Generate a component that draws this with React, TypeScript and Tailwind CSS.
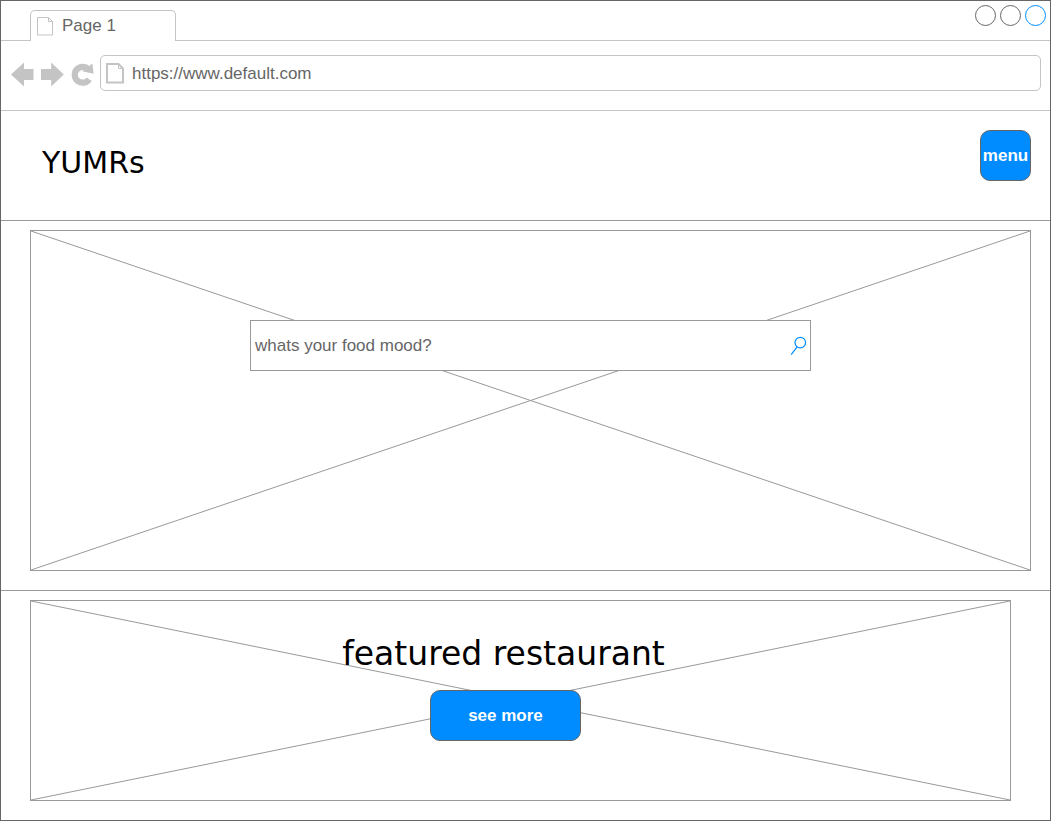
import React from "react";

function PageIcon() {
  return (
    <svg viewBox="0 0 18 20" className="h-5 w-[18px]" fill="none" stroke="#c4c4c4" strokeWidth="1" aria-hidden="true">
      <path d="M1.5 1.5H12.5L16.5 5.5V19H1.5Z" />
      <path d="M12.5 1.5V5.5H16.5" />
    </svg>
  );
}

function AddressPageIcon() {
  return (
    <svg viewBox="0 0 18 22" className="h-[22px] w-[18px]" fill="none" stroke="#c4c4c4" strokeWidth="2" aria-hidden="true">
      <path d="M1 2H12.5L17 6.5V20.5H1Z" />
      <path d="M12.5 2V6.5H17" strokeWidth="1" />
    </svg>
  );
}

function BackIcon() {
  return (
    <svg viewBox="0 0 24 26" className="h-[26px] w-6" fill="#c4c4c4" aria-hidden="true">
      <path d="M1 13.5L14 1.5V8H23.5V19H14V25.5Z" />
    </svg>
  );
}

function ForwardIcon() {
  return (
    <svg viewBox="0 0 24 26" className="h-[26px] w-6" fill="#c4c4c4" aria-hidden="true">
      <path d="M23.8 13.5L11.2 1.5V8H1V19H11.2V25.5Z" />
    </svg>
  );
}

function ReloadIcon() {
  return (
    <svg viewBox="0 0 24 26" className="h-[26px] w-6" aria-hidden="true">
      <path d="M19.2 18.2A7.9 7.9 0 1 1 18.4 8.4" fill="none" stroke="#c4c4c4" strokeWidth="6.2" />
      <path d="M22.4 2.6L23.6 12.8L12.2 10.2Z" fill="#c4c4c4" />
    </svg>
  );
}

function SearchIcon() {
  return (
    <svg viewBox="0 0 18 20" className="h-5 w-[18px]" fill="none" stroke="#008cff" strokeWidth="1.2" aria-hidden="true">
      <circle cx="11.3" cy="6.6" r="5.3" />
      <path d="M8.1 10.9L2.2 18.7" />
    </svg>
  );
}

function ImagePlaceholder({ className, children }: { className: string; children: React.ReactNode }) {
  return (
    <div className={`relative border border-[#999] ${className}`}>
      <svg className="absolute inset-0 h-full w-full" stroke="#999" strokeWidth="1" aria-hidden="true">
        <line x1="0" y1="0" x2="100%" y2="100%" />
        <line x1="0" y1="100%" x2="100%" y2="0" />
      </svg>
      {children}
    </div>
  );
}

function TabBar() {
  return (
    <div className="flex h-10 items-stretch">
      <div className="w-[29px] border-b border-[#c4c4c4]" />
      <div className="mt-[9px] flex w-[146px] items-center gap-2 rounded-t-[5px] border border-b-0 border-[#c4c4c4] pl-[5px] text-[17px] leading-5">
        <PageIcon />
        Page 1
      </div>
      <div className="flex flex-1 items-start justify-end gap-1 border-b border-[#c4c4c4] pt-1 pr-1">
        <button type="button" aria-label="Minimize" className="size-[21px] rounded-full border border-[#666]" />
        <button type="button" aria-label="Maximize" className="size-[21px] rounded-full border border-[#666]" />
        <button type="button" aria-label="Close" className="size-[21px] rounded-full border border-[#008cff]" />
      </div>
    </div>
  );
}

function AddressBar() {
  return (
    <div className="flex h-[70px] items-start border-b border-[#c4c4c4] px-[9px] pt-[14px]">
      <div className="mt-[6px] flex gap-[6px]">
        <button type="button" aria-label="Back"><BackIcon /></button>
        <button type="button" aria-label="Forward"><ForwardIcon /></button>
        <button type="button" aria-label="Reload"><ReloadIcon /></button>
      </div>
      <div className="ml-[6px] flex h-9 flex-1 items-center gap-2 rounded-[5px] border border-[#c4c4c4] pl-[5px]">
        <AddressPageIcon />
        <input type="text" aria-label="Address" defaultValue="https://www.default.com" className="min-w-0 flex-1 pt-px text-[17px] leading-5 outline-none" />
      </div>
    </div>
  );
}

export default function App() {
  return (
    <div className="flex min-h-screen flex-col border border-[#666] bg-white font-['Liberation_Sans',Arial,sans-serif] text-[#666]">
      <TabBar />
      <AddressBar />
      <header className="flex h-[110px] items-start justify-between border-b border-[#999] pt-[19px] pr-[19px] pl-[41px]">
        <h1 className="mt-[13px] font-['DejaVu_Sans',Verdana,sans-serif] text-[30px] leading-10 text-black">YUMRs</h1>
        <button type="button" className="h-[51px] w-[51px] rounded-[10px] border border-[#666] bg-[#008cff] text-[17px] font-bold text-white">
          menu
        </button>
      </header>
      <main>
        <section className="border-b border-[#999] pt-[9px] pr-[19px] pb-[19px] pl-[29px]">
          <ImagePlaceholder className="flex h-[341px] items-start justify-center pt-[89px]">
            <form onSubmit={(e) => e.preventDefault()} className="relative flex h-[51px] w-[561px] items-center border border-[#999] bg-white pr-[3px] pl-1">
              <input type="text" aria-label="Food mood" placeholder="whats your food mood?" className="min-w-0 flex-1 text-[17px] leading-5 outline-none placeholder:text-[#666]" />
              <button type="submit" aria-label="Search"><SearchIcon /></button>
            </form>
          </ImagePlaceholder>
        </section>
        <section className="pt-[9px] pr-[39px] pb-[19px] pl-[29px]">
          <ImagePlaceholder className="flex h-[201px] flex-col items-center pt-[33px] pr-[30px]">
            <h2 className="relative pr-1 font-['DejaVu_Sans',Verdana,sans-serif] text-[33px] leading-10 text-black">featured restaurant</h2>
            <button type="button" className="relative mt-4 h-[51px] w-[151px] rounded-[10px] border border-[#666] bg-[#008cff] text-[17px] font-bold text-white">
              see more
            </button>
          </ImagePlaceholder>
        </section>
      </main>
    </div>
  );
}
